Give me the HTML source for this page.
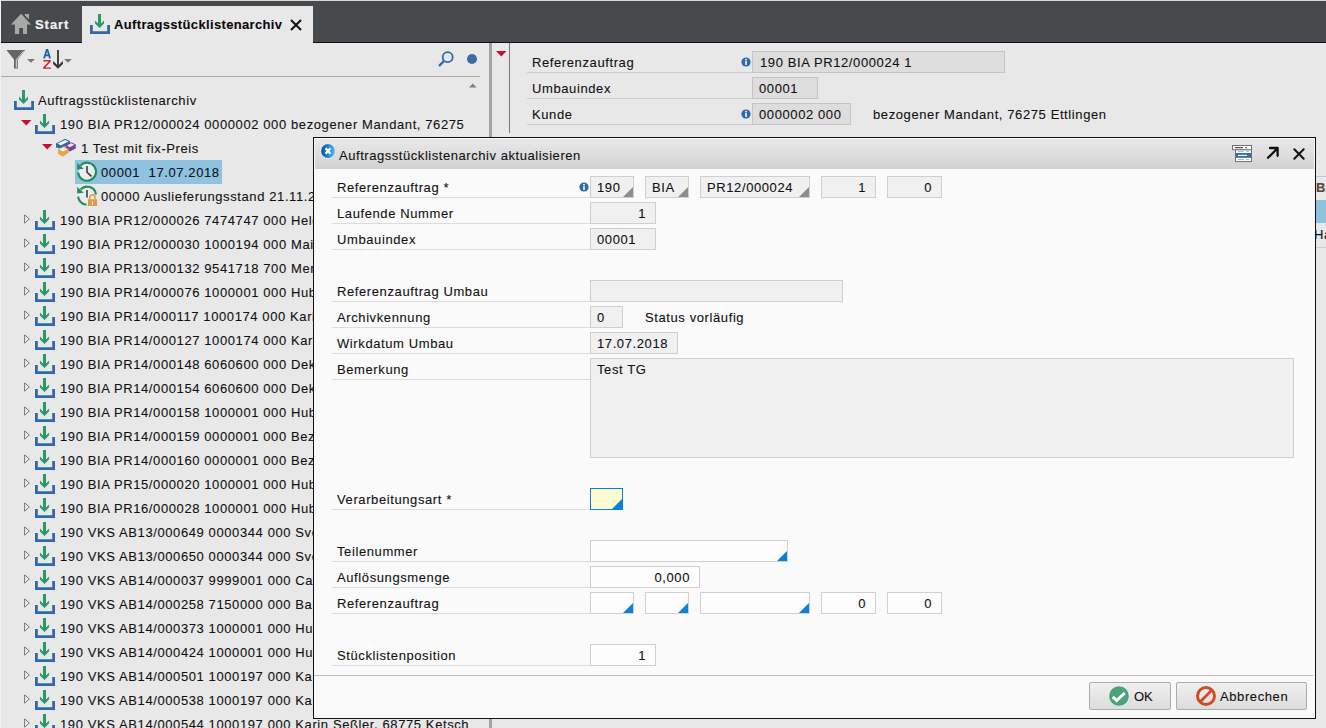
<!DOCTYPE html>
<html><head><meta charset="utf-8">
<style>
*{box-sizing:border-box}
html,body{margin:0;padding:0}
body{width:1326px;height:728px;overflow:hidden;position:relative;background:#e8e8e8;font-family:"Liberation Sans",sans-serif;font-size:13px;color:#111}
.t{position:absolute;white-space:pre;line-height:16px;letter-spacing:0.6px;-webkit-text-stroke:0.1px #111}
.ic{position:absolute;overflow:visible}
.abs{position:absolute}
.f{position:absolute;height:22px;border:1px solid #cfcfcf;background:#f0f0f0}
.fr{position:absolute;height:22px;border:1px solid #c4c4c4;background:#dddddd}
.fw{position:absolute;height:22px;border:1px solid #d0d0d0;background:#fdfdfd}
.ln{position:absolute;height:1px;background:#dcdcdc}
</style></head><body>
<svg width="0" height="0" style="position:absolute">
<defs>
<symbol id="dl" viewBox="0 0 20 20">
<path d="M1.4 11V18.6H18.6V11" fill="none" stroke="#3068a8" stroke-width="2.8"/>
<path d="M8 0H11V9.5L14 6.5V9.5L9.5 14L5 9.5V6.5L8 9.5Z" fill="#2a9a6a"/>
</symbol>
<symbol id="info" viewBox="0 0 10 10">
<circle cx="5" cy="5" r="4.6" fill="#2f68a8"/>
<rect x="4.2" y="4.1" width="1.6" height="3.8" fill="#fff"/>
<circle cx="5" cy="2.7" r="0.9" fill="#fff"/>
</symbol>
</defs></svg>

<div class="abs" style="left:0;top:0;width:1326px;height:1px;background:#d8d8d8"></div>
<div class="abs" style="left:0;top:0;width:1px;height:728px;background:#f2f2f2"></div>
<div class="abs" style="left:1px;top:1px;width:1325px;height:41px;background:#464a4d"></div>
<div class="abs" style="left:1px;top:42px;width:81px;height:1px;background:#111"></div>
<div class="abs" style="left:313px;top:42px;width:1013px;height:1px;background:#111"></div>
<svg class="ic" width="28" height="28" viewBox="0 0 28 28" style="left:8px;top:10px"><path d="M13.1 3.8L2.9 14.6H6.9V24H11.2V18.1H15V24H19V14.6H23.1Z" fill="#a8a8a8"/><path d="M16.9 4H21V9.6L16.9 5.3Z" fill="#a8a8a8"/></svg>
<div class="t" style="left:35px;top:17px;color:#f2f2f2;font-weight:bold;letter-spacing:0.95px;-webkit-text-stroke:0.2px #f2f2f2">Start</div>
<div class="abs" style="left:82px;top:6px;width:231px;height:37px;background:#e8e8e8"></div>
<svg class="ic" width="20" height="20" viewBox="0 0 20 20" style="left:90px;top:14px"><use href="#dl"/></svg>
<div class="t" style="left:114px;top:17px;font-weight:bold;letter-spacing:0.35px;color:#0a0a0a">Auftragsstücklistenarchiv</div>
<svg class="ic" width="12" height="12" viewBox="0 0 12 12" style="left:290px;top:18.5px"><path d="M1 1L11 11M11 1L1 11" stroke="#111" stroke-width="2"/></svg>
<svg class="ic" width="32" height="24" viewBox="0 0 32 24" style="left:4px;top:46px"><path d="M2.4 4.1H21.2L13.8 13.6V22.5H10V13.6Z" fill="#666"/><path d="M19.6 5.2L12.3 13.8V21.6" fill="none" stroke="#e8e8e8" stroke-width="0.9"/><path d="M23 13H30.9L26.95 16.8Z" fill="#777"/></svg>
<svg class="ic" width="32" height="24" viewBox="0 0 32 24" style="left:42px;top:46px"><path fill-rule="evenodd" d="M1.1 12.5L4.1 3H6.1L9 12.5H7.1L6.4 10.2H3.7L3 12.5ZM4.2 8.5H5.9L5.05 5.6Z" fill="#2060b0"/><path d="M1.4 14.1H8.8V15.4L3.3 21.5H9V22.8H1.1V21.5L6.6 15.4H1.4Z" fill="#c03020"/><path d="M16 4V20" stroke="#333" stroke-width="1.8"/><path d="M11.1 15L16 19.8L20.9 15V18L16 22.8L11.1 18Z" fill="#333"/><path d="M22 13H29.9L25.95 16.8Z" fill="#777"/></svg>
<svg class="ic" width="20" height="20" viewBox="0 0 20 20" style="left:436px;top:49px"><circle cx="11.7" cy="8.2" r="5" fill="none" stroke="#2f68a8" stroke-width="1.8"/><path d="M8 12L3 17" stroke="#2f68a8" stroke-width="2.4"/></svg>
<div class="abs" style="left:467px;top:54px;width:10px;height:10px;border-radius:50%;background:#3a6ea5"></div>
<div class="abs" style="left:1px;top:76px;width:479px;height:1px;background:#a8a8a8"></div>
<svg class="ic" width="8" height="5" viewBox="0 0 8 5" style="left:469px;top:82.5px"><path d="M0 4.5H7.5L3.75 0.5Z" fill="#808080"/></svg>
<svg class="ic" width="20" height="20" viewBox="0 0 20 20" style="left:14px;top:90px"><use href="#dl"/></svg>
<div class="t" style="left:38px;top:93px;">Auftragsstücklistenarchiv</div>
<svg class="ic" width="11" height="6" viewBox="0 0 11 6" style="left:21px;top:119.5px"><path d="M0 0H10.5L5.25 5.5Z" fill="#c8102e"/></svg>
<svg class="ic" width="20" height="20" viewBox="0 0 20 20" style="left:35px;top:114px"><use href="#dl"/></svg>
<div class="t" style="left:60px;top:117px;">190 BIA PR12/000024 0000002 000 bezogener Mandant, 76275</div>
<svg class="ic" width="11" height="6" viewBox="0 0 11 6" style="left:42px;top:143.5px"><path d="M0 0H10.5L5.25 5.5Z" fill="#c8102e"/></svg>
<svg class="ic" width="24" height="24" viewBox="0 0 24 24" style="left:54px;top:136px">
<path d="M2 7.4L11.2 2.8L16 5.3V7.8L6.8 12.4L2 11.6Z" fill="#2f68a8"/><path d="M3.6 7.5L11.1 3.9L14.4 5.6L6.6 9.6Z" fill="#f2f4f8"/>
<path d="M11.5 9.6L17.4 6.2L21.8 8.6V12.5L15.8 15.6L11.5 13Z" fill="#7d3ea6"/><path d="M13 9.6L17.4 7.3L20.3 8.8L15.8 11.2Z" fill="#f2eef6"/>
<path d="M4 13.2L9.6 10.3L14.8 13.2V16.5L8.6 20.8L4 17.8Z" fill="#e2a84c"/><path d="M5.3 13.3L9.6 11.3L13.4 13.4L8.8 15.6Z" fill="#f4f2ec"/>
</svg>
<div class="t" style="left:81px;top:141px;">1 Test mit fix-Preis</div>
<div class="abs" style="left:75px;top:160px;width:147px;height:24px;background:#8fc1e0"></div>
<svg class="ic" width="22" height="22" viewBox="0 0 22 22" style="left:76px;top:161px">
<circle cx="11.1" cy="10.7" r="8.5" fill="#ececec"/>
<path d="M2.1 11.6A9 9 0 1 0 4.6 4.4" fill="none" stroke="#1f8f5a" stroke-width="2.1"/>
<path d="M1.2 2L1.2 8.6L7.8 7.8Z" fill="#1f8f5a"/>
<path d="M11 5V11.2L15.4 15.4" fill="none" stroke="#333" stroke-width="1.5"/>
</svg>
<div class="t" style="left:101px;top:165px;">00001  17.07.2018</div>
<svg class="ic" width="22" height="22" viewBox="0 0 22 22" style="left:76px;top:185px">
<circle cx="11.1" cy="10.7" r="8.5" fill="#ececec"/>
<path d="M4.6 4.4A9 9 0 0 1 20 9.5" fill="none" stroke="#1f8f5a" stroke-width="2.1"/>
<path d="M2.1 11.6A9 9 0 0 0 10.5 19.7" fill="none" stroke="#1f8f5a" stroke-width="2.1"/>
<path d="M1.2 2L1.2 8.6L7.8 7.8Z" fill="#1f8f5a"/>
<path d="M11 5V12.5" fill="none" stroke="#333" stroke-width="1.5"/>
<path d="M13.8 14.2V12.4A2.65 2.65 0 0 1 19.1 12.4V14.2" fill="none" stroke="#dc9d45" stroke-width="1.6"/>
<rect x="12" y="14.2" width="9.1" height="6.8" fill="#dc9d45"/><rect x="16.2" y="16" width="0.8" height="4" fill="#fff"/>
</svg>
<div class="t" style="left:101px;top:189px;">00000 Auslieferungsstand 21.11.2017</div>
<svg class="ic" width="7" height="10" viewBox="0 0 7 10" style="left:23.5px;top:214px"><path d="M0.6 0.8V9.2L5.4 5Z" fill="none" stroke="#7a7a7a" stroke-width="1"/></svg>
<svg class="ic" width="20" height="20" viewBox="0 0 20 20" style="left:35px;top:210px"><use href="#dl"/></svg>
<div class="t" style="left:60px;top:213px;">190 BIA PR12/000026 7474747 000 Helga Berger, 76131 Karlsruhe</div>
<svg class="ic" width="7" height="10" viewBox="0 0 7 10" style="left:23.5px;top:238px"><path d="M0.6 0.8V9.2L5.4 5Z" fill="none" stroke="#7a7a7a" stroke-width="1"/></svg>
<svg class="ic" width="20" height="20" viewBox="0 0 20 20" style="left:35px;top:234px"><use href="#dl"/></svg>
<div class="t" style="left:60px;top:237px;">190 BIA PR12/000030 1000194 000 Maiwald GmbH, 76227 Karlsruhe</div>
<svg class="ic" width="7" height="10" viewBox="0 0 7 10" style="left:23.5px;top:262px"><path d="M0.6 0.8V9.2L5.4 5Z" fill="none" stroke="#7a7a7a" stroke-width="1"/></svg>
<svg class="ic" width="20" height="20" viewBox="0 0 20 20" style="left:35px;top:258px"><use href="#dl"/></svg>
<div class="t" style="left:60px;top:261px;">190 BIA PR13/000132 9541718 700 Merkle AG, 70173 Stuttgart</div>
<svg class="ic" width="7" height="10" viewBox="0 0 7 10" style="left:23.5px;top:286px"><path d="M0.6 0.8V9.2L5.4 5Z" fill="none" stroke="#7a7a7a" stroke-width="1"/></svg>
<svg class="ic" width="20" height="20" viewBox="0 0 20 20" style="left:35px;top:282px"><use href="#dl"/></svg>
<div class="t" style="left:60px;top:285px;">190 BIA PR14/000076 1000001 000 Huber GmbH, 76185 Karlsruhe</div>
<svg class="ic" width="7" height="10" viewBox="0 0 7 10" style="left:23.5px;top:310px"><path d="M0.6 0.8V9.2L5.4 5Z" fill="none" stroke="#7a7a7a" stroke-width="1"/></svg>
<svg class="ic" width="20" height="20" viewBox="0 0 20 20" style="left:35px;top:306px"><use href="#dl"/></svg>
<div class="t" style="left:60px;top:309px;">190 BIA PR14/000117 1000174 000 Karin Meier, 76275 Ettlingen</div>
<svg class="ic" width="7" height="10" viewBox="0 0 7 10" style="left:23.5px;top:334px"><path d="M0.6 0.8V9.2L5.4 5Z" fill="none" stroke="#7a7a7a" stroke-width="1"/></svg>
<svg class="ic" width="20" height="20" viewBox="0 0 20 20" style="left:35px;top:330px"><use href="#dl"/></svg>
<div class="t" style="left:60px;top:333px;">190 BIA PR14/000127 1000174 000 Karin Meier, 76275 Ettlingen</div>
<svg class="ic" width="7" height="10" viewBox="0 0 7 10" style="left:23.5px;top:358px"><path d="M0.6 0.8V9.2L5.4 5Z" fill="none" stroke="#7a7a7a" stroke-width="1"/></svg>
<svg class="ic" width="20" height="20" viewBox="0 0 20 20" style="left:35px;top:354px"><use href="#dl"/></svg>
<div class="t" style="left:60px;top:357px;">190 BIA PR14/000148 6060600 000 Dekra AG, 70565 Stuttgart</div>
<svg class="ic" width="7" height="10" viewBox="0 0 7 10" style="left:23.5px;top:382px"><path d="M0.6 0.8V9.2L5.4 5Z" fill="none" stroke="#7a7a7a" stroke-width="1"/></svg>
<svg class="ic" width="20" height="20" viewBox="0 0 20 20" style="left:35px;top:378px"><use href="#dl"/></svg>
<div class="t" style="left:60px;top:381px;">190 BIA PR14/000154 6060600 000 Dekra AG, 70565 Stuttgart</div>
<svg class="ic" width="7" height="10" viewBox="0 0 7 10" style="left:23.5px;top:406px"><path d="M0.6 0.8V9.2L5.4 5Z" fill="none" stroke="#7a7a7a" stroke-width="1"/></svg>
<svg class="ic" width="20" height="20" viewBox="0 0 20 20" style="left:35px;top:402px"><use href="#dl"/></svg>
<div class="t" style="left:60px;top:405px;">190 BIA PR14/000158 1000001 000 Huber GmbH, 76185 Karlsruhe</div>
<svg class="ic" width="7" height="10" viewBox="0 0 7 10" style="left:23.5px;top:430px"><path d="M0.6 0.8V9.2L5.4 5Z" fill="none" stroke="#7a7a7a" stroke-width="1"/></svg>
<svg class="ic" width="20" height="20" viewBox="0 0 20 20" style="left:35px;top:426px"><use href="#dl"/></svg>
<div class="t" style="left:60px;top:429px;">190 BIA PR14/000159 0000001 000 Bezogener Mandant</div>
<svg class="ic" width="7" height="10" viewBox="0 0 7 10" style="left:23.5px;top:454px"><path d="M0.6 0.8V9.2L5.4 5Z" fill="none" stroke="#7a7a7a" stroke-width="1"/></svg>
<svg class="ic" width="20" height="20" viewBox="0 0 20 20" style="left:35px;top:450px"><use href="#dl"/></svg>
<div class="t" style="left:60px;top:453px;">190 BIA PR14/000160 0000001 000 Bezogener Mandant</div>
<svg class="ic" width="7" height="10" viewBox="0 0 7 10" style="left:23.5px;top:478px"><path d="M0.6 0.8V9.2L5.4 5Z" fill="none" stroke="#7a7a7a" stroke-width="1"/></svg>
<svg class="ic" width="20" height="20" viewBox="0 0 20 20" style="left:35px;top:474px"><use href="#dl"/></svg>
<div class="t" style="left:60px;top:477px;">190 BIA PR15/000020 1000001 000 Huber GmbH, 76185 Karlsruhe</div>
<svg class="ic" width="7" height="10" viewBox="0 0 7 10" style="left:23.5px;top:502px"><path d="M0.6 0.8V9.2L5.4 5Z" fill="none" stroke="#7a7a7a" stroke-width="1"/></svg>
<svg class="ic" width="20" height="20" viewBox="0 0 20 20" style="left:35px;top:498px"><use href="#dl"/></svg>
<div class="t" style="left:60px;top:501px;">190 BIA PR16/000028 1000001 000 Huber GmbH, 76185 Karlsruhe</div>
<svg class="ic" width="7" height="10" viewBox="0 0 7 10" style="left:23.5px;top:526px"><path d="M0.6 0.8V9.2L5.4 5Z" fill="none" stroke="#7a7a7a" stroke-width="1"/></svg>
<svg class="ic" width="20" height="20" viewBox="0 0 20 20" style="left:35px;top:522px"><use href="#dl"/></svg>
<div class="t" style="left:60px;top:525px;">190 VKS AB13/000649 0000344 000 Sven Maier, 76133 Karlsruhe</div>
<svg class="ic" width="7" height="10" viewBox="0 0 7 10" style="left:23.5px;top:550px"><path d="M0.6 0.8V9.2L5.4 5Z" fill="none" stroke="#7a7a7a" stroke-width="1"/></svg>
<svg class="ic" width="20" height="20" viewBox="0 0 20 20" style="left:35px;top:546px"><use href="#dl"/></svg>
<div class="t" style="left:60px;top:549px;">190 VKS AB13/000650 0000344 000 Sven Maier, 76133 Karlsruhe</div>
<svg class="ic" width="7" height="10" viewBox="0 0 7 10" style="left:23.5px;top:574px"><path d="M0.6 0.8V9.2L5.4 5Z" fill="none" stroke="#7a7a7a" stroke-width="1"/></svg>
<svg class="ic" width="20" height="20" viewBox="0 0 20 20" style="left:35px;top:570px"><use href="#dl"/></svg>
<div class="t" style="left:60px;top:573px;">190 VKS AB14/000037 9999001 000 Carl Weber, 76131 Karlsruhe</div>
<svg class="ic" width="7" height="10" viewBox="0 0 7 10" style="left:23.5px;top:598px"><path d="M0.6 0.8V9.2L5.4 5Z" fill="none" stroke="#7a7a7a" stroke-width="1"/></svg>
<svg class="ic" width="20" height="20" viewBox="0 0 20 20" style="left:35px;top:594px"><use href="#dl"/></svg>
<div class="t" style="left:60px;top:597px;">190 VKS AB14/000258 7150000 000 Bart GmbH, 76189 Karlsruhe</div>
<svg class="ic" width="7" height="10" viewBox="0 0 7 10" style="left:23.5px;top:622px"><path d="M0.6 0.8V9.2L5.4 5Z" fill="none" stroke="#7a7a7a" stroke-width="1"/></svg>
<svg class="ic" width="20" height="20" viewBox="0 0 20 20" style="left:35px;top:618px"><use href="#dl"/></svg>
<div class="t" style="left:60px;top:621px;">190 VKS AB14/000373 1000001 000 Huber GmbH, 76185 Karlsruhe</div>
<svg class="ic" width="7" height="10" viewBox="0 0 7 10" style="left:23.5px;top:646px"><path d="M0.6 0.8V9.2L5.4 5Z" fill="none" stroke="#7a7a7a" stroke-width="1"/></svg>
<svg class="ic" width="20" height="20" viewBox="0 0 20 20" style="left:35px;top:642px"><use href="#dl"/></svg>
<div class="t" style="left:60px;top:645px;">190 VKS AB14/000424 1000001 000 Huber GmbH, 76185 Karlsruhe</div>
<svg class="ic" width="7" height="10" viewBox="0 0 7 10" style="left:23.5px;top:670px"><path d="M0.6 0.8V9.2L5.4 5Z" fill="none" stroke="#7a7a7a" stroke-width="1"/></svg>
<svg class="ic" width="20" height="20" viewBox="0 0 20 20" style="left:35px;top:666px"><use href="#dl"/></svg>
<div class="t" style="left:60px;top:669px;">190 VKS AB14/000501 1000197 000 Karin Seßler, 68775 Ketsch</div>
<svg class="ic" width="7" height="10" viewBox="0 0 7 10" style="left:23.5px;top:694px"><path d="M0.6 0.8V9.2L5.4 5Z" fill="none" stroke="#7a7a7a" stroke-width="1"/></svg>
<svg class="ic" width="20" height="20" viewBox="0 0 20 20" style="left:35px;top:690px"><use href="#dl"/></svg>
<div class="t" style="left:60px;top:693px;">190 VKS AB14/000538 1000197 000 Karin Seßler, 68775 Ketsch</div>
<svg class="ic" width="7" height="10" viewBox="0 0 7 10" style="left:23.5px;top:718px"><path d="M0.6 0.8V9.2L5.4 5Z" fill="none" stroke="#7a7a7a" stroke-width="1"/></svg>
<svg class="ic" width="20" height="20" viewBox="0 0 20 20" style="left:35px;top:714px"><use href="#dl"/></svg>
<div class="t" style="left:60px;top:717px;">190 VKS AB14/000544 1000197 000 Karin Seßler, 68775 Ketsch</div>
<div class="abs" style="left:489px;top:43px;width:3px;height:685px;background:#a4a4a4"></div>
<svg class="ic" width="11" height="6" viewBox="0 0 11 6" style="left:495.5px;top:50.5px"><path d="M0 0H10.5L5.25 5.5Z" fill="#c8102e"/></svg>
<div class="abs" style="left:509px;top:43px;width:1px;height:90px;background:#7a7a7a"></div>
<div class="t" style="left:532px;top:55px;">Referenzauftrag</div>
<div class="abs" style="left:527px;top:72px;width:225px;height:1px;background:#cdcdcd"></div>
<div class="t" style="left:532px;top:81px;">Umbauindex</div>
<div class="abs" style="left:527px;top:98px;width:225px;height:1px;background:#cdcdcd"></div>
<div class="t" style="left:532px;top:107px;">Kunde</div>
<div class="abs" style="left:527px;top:124px;width:225px;height:1px;background:#cdcdcd"></div>
<svg class="ic" width="10" height="10" style="left:741px;top:57px"><use href="#info"/></svg>
<svg class="ic" width="10" height="10" style="left:741px;top:109px"><use href="#info"/></svg>
<div class="fr" style="left:752px;top:51px;width:253px"></div>
<div class="t" style="left:760px;top:55px;">190 BIA PR12/000024 1</div>
<div class="fr" style="left:752px;top:77px;width:66px"></div>
<div class="t" style="left:759px;top:81px;">00001</div>
<div class="fr" style="left:752px;top:103px;width:99px"></div>
<div class="t" style="left:759px;top:107px;">0000002 000</div>
<div class="t" style="left:873px;top:107px;">bezogener Mandant, 76275 Ettlingen</div>
<div class="abs" style="left:1316px;top:176px;width:10px;height:1px;background:#c8c8c8"></div>
<div class="t" style="left:1316px;top:180px;font-weight:bold;color:#5a4a3a">Be</div>
<div class="abs" style="left:1316px;top:200px;width:10px;height:23px;background:#8fc1e0"></div>
<div class="t" style="left:1314px;top:227px">Ha</div>
<div class="abs" style="left:1316px;top:247px;width:10px;height:1px;background:#d0d0d0"></div>
<div class="abs" style="left:313px;top:137px;width:1003px;height:582px;background:#fafafa;border:1px solid #111"></div>
<div class="abs" style="left:315px;top:139px;width:999px;height:30px;background:linear-gradient(#e9e9e9,#d2d2d2)"></div>
<svg class="ic" width="16" height="16" viewBox="0 0 16 16" style="left:320px;top:143px"><defs><linearGradient id="tg" x1="0" x2="1" y1="0" y2="0"><stop offset="0" stop-color="#0a5590"/><stop offset="0.5" stop-color="#1f86c8"/><stop offset="1" stop-color="#5ab8e6"/></linearGradient></defs><circle cx="8" cy="8" r="7.6" fill="#e6f2fb"/><circle cx="8" cy="8" r="6.9" fill="url(#tg)"/><path d="M5.6 5.2L10.4 10.8M10.4 5.2L5.6 10.8" stroke="#fff" stroke-width="2.1"/></svg>
<div class="t" style="left:339px;top:148px;letter-spacing:0.55px">Auftragsstücklistenarchiv aktualisieren</div>
<svg class="ic" width="21" height="18" viewBox="0 0 21 18" style="left:1232px;top:145px">
<rect x="3.5" y="4.6" width="16" height="12" fill="#fff" stroke="#707070"/>
<rect x="0.5" y="0.5" width="19" height="4.2" fill="#fff" stroke="#707070"/>
<rect x="4" y="8" width="15" height="4.8" fill="#2f6db5"/>
<path d="M3 2.6H11M13.2 2.6H15" stroke="#555" stroke-width="1.1"/>
<path d="M6 6.3H12M14 6.3H17M6 14.6H12M14 14.6H17" stroke="#aaa" stroke-width="0.9"/>
<path d="M6 10.4H15" stroke="#fff" stroke-width="1.1"/>
</svg>
<svg class="ic" width="14" height="14" viewBox="0 0 14 14" style="left:1266px;top:146px"><path d="M2 11.8L11 2.8M4 2H11.6V9.8" fill="none" stroke="#111" stroke-width="2.3" stroke-linecap="round" stroke-linejoin="round"/></svg>
<svg class="ic" width="12" height="12" viewBox="0 0 12 12" style="left:1292.5px;top:147.5px"><path d="M1.3 1.3L10.7 10.7M10.7 1.3L1.3 10.7" stroke="#111" stroke-width="2" stroke-linecap="round"/></svg>
<div class="t" style="left:337px;top:180px;">Referenzauftrag *</div>
<div class="ln" style="left:332px;top:197px;width:258px"></div>
<svg class="ic" width="10" height="10" style="left:578.5px;top:182px"><use href="#info"/></svg>
<div class="f" style="left:590px;top:176px;width:44px"></div>
<div class="t" style="left:597px;top:180px;">190</div>
<svg class="ic" width="10" height="10" viewBox="0 0 10 10" style="left:623px;top:187px"><path d="M10 0V10H0Z" fill="#8e8e8e"/></svg>
<div class="f" style="left:645px;top:176px;width:44px"></div>
<div class="t" style="left:652px;top:180px;">BIA</div>
<svg class="ic" width="10" height="10" viewBox="0 0 10 10" style="left:678px;top:187px"><path d="M10 0V10H0Z" fill="#8e8e8e"/></svg>
<div class="f" style="left:700px;top:176px;width:110px"></div>
<div class="t" style="left:707px;top:180px;">PR12/000024</div>
<svg class="ic" width="10" height="10" viewBox="0 0 10 10" style="left:799px;top:187px"><path d="M10 0V10H0Z" fill="#8e8e8e"/></svg>
<div class="f" style="left:821px;top:176px;width:55px"></div>
<div class="t" style="left:821px;top:180px;width:45px;text-align:right">1</div>
<div class="f" style="left:887px;top:176px;width:55px"></div>
<div class="t" style="left:887px;top:180px;width:45px;text-align:right">0</div>
<div class="t" style="left:337px;top:206px;">Laufende Nummer</div>
<div class="ln" style="left:332px;top:223px;width:258px"></div>
<div class="f" style="left:590px;top:202px;width:66px"></div>
<div class="t" style="left:590px;top:206px;width:56px;text-align:right">1</div>
<div class="t" style="left:337px;top:232px;">Umbauindex</div>
<div class="ln" style="left:332px;top:249px;width:258px"></div>
<div class="f" style="left:590px;top:228px;width:66px"></div>
<div class="t" style="left:597px;top:232px;">00001</div>
<div class="t" style="left:337px;top:284px;">Referenzauftrag Umbau</div>
<div class="ln" style="left:332px;top:301px;width:258px"></div>
<div class="f" style="left:590px;top:280px;width:253px"></div>
<div class="t" style="left:337px;top:310px;">Archivkennung</div>
<div class="ln" style="left:332px;top:327px;width:258px"></div>
<div class="f" style="left:590px;top:306px;width:33px"></div>
<div class="t" style="left:597px;top:310px;">0</div>
<div class="t" style="left:645px;top:310px;">Status vorläufig</div>
<div class="t" style="left:337px;top:336px;">Wirkdatum Umbau</div>
<div class="ln" style="left:332px;top:353px;width:258px"></div>
<div class="f" style="left:590px;top:332px;width:88px"></div>
<div class="t" style="left:597px;top:336px;">17.07.2018</div>
<div class="t" style="left:337px;top:362px;">Bemerkung</div>
<div class="ln" style="left:332px;top:379px;width:258px"></div>
<div class="f" style="left:590px;top:358px;width:704px;height:100px"></div>
<div class="t" style="left:597px;top:362px;">Test TG</div>
<div class="t" style="left:337px;top:492px;">Verarbeitungsart *</div>
<div class="ln" style="left:332px;top:509px;width:258px"></div>
<div class="abs" style="left:590px;top:488px;width:33px;height:22px;background:#fdfbcf;border:1px solid #0b80d8"></div>
<svg class="ic" width="10" height="10" viewBox="0 0 10 10" style="left:612px;top:499px"><path d="M10 0V10H0Z" fill="#0b80d8"/></svg>
<div class="t" style="left:337px;top:544px;">Teilenummer</div>
<div class="ln" style="left:332px;top:561px;width:258px"></div>
<div class="fw" style="left:590px;top:540px;width:198px"></div>
<svg class="ic" width="10" height="10" viewBox="0 0 10 10" style="left:777px;top:551px"><path d="M10 0V10H0Z" fill="#0b80d8"/></svg>
<div class="t" style="left:337px;top:570px;">Auflösungsmenge</div>
<div class="ln" style="left:332px;top:587px;width:258px"></div>
<div class="fw" style="left:590px;top:566px;width:110px"></div>
<div class="t" style="left:590px;top:570px;width:100px;text-align:right">0,000</div>
<div class="t" style="left:337px;top:596px;">Referenzauftrag</div>
<div class="ln" style="left:332px;top:613px;width:258px"></div>
<div class="fw" style="left:590px;top:592px;width:44px"></div>
<svg class="ic" width="10" height="10" viewBox="0 0 10 10" style="left:623px;top:603px"><path d="M10 0V10H0Z" fill="#0b80d8"/></svg>
<div class="fw" style="left:645px;top:592px;width:44px"></div>
<svg class="ic" width="10" height="10" viewBox="0 0 10 10" style="left:678px;top:603px"><path d="M10 0V10H0Z" fill="#0b80d8"/></svg>
<div class="fw" style="left:700px;top:592px;width:110px"></div>
<svg class="ic" width="10" height="10" viewBox="0 0 10 10" style="left:799px;top:603px"><path d="M10 0V10H0Z" fill="#0b80d8"/></svg>
<div class="fw" style="left:821px;top:592px;width:55px"></div>
<div class="t" style="left:821px;top:596px;width:45px;text-align:right">0</div>
<div class="fw" style="left:887px;top:592px;width:55px"></div>
<div class="t" style="left:887px;top:596px;width:45px;text-align:right">0</div>
<div class="t" style="left:337px;top:648px;">Stücklistenposition</div>
<div class="ln" style="left:332px;top:665px;width:258px"></div>
<div class="fw" style="left:590px;top:644px;width:66px"></div>
<div class="t" style="left:590px;top:648px;width:56px;text-align:right">1</div>
<div class="abs" style="left:314px;top:675px;width:999px;height:1px;background:#bdbdbd"></div>
<div style="position:absolute;height:28px;border:1px solid #acacac;border-radius:2px;background:linear-gradient(#f0f0f0,#dcdcdc);left:1089px;top:682px;width:82px"></div>
<svg class="ic" width="20" height="20" viewBox="0 0 20 20" style="left:1109px;top:686px"><circle cx="10" cy="10" r="9.8" fill="#48a27a"/><path d="M3.8 10.8L7.6 14.4L15.8 7" fill="none" stroke="#fff" stroke-width="3"/></svg>
<div class="t" style="left:1134px;top:689px;letter-spacing:0px">OK</div>
<div style="position:absolute;height:28px;border:1px solid #acacac;border-radius:2px;background:linear-gradient(#f0f0f0,#dcdcdc);left:1176px;top:682px;width:131px"></div>
<svg class="ic" width="20" height="20" viewBox="0 0 20 20" style="left:1196px;top:686px"><circle cx="10" cy="10" r="8.5" fill="none" stroke="#d04a2a" stroke-width="2.9"/><path d="M4.5 15.5L15.5 4.5" stroke="#d04a2a" stroke-width="2.9"/></svg>
<div class="t" style="left:1220px;top:689px;">Abbrechen</div>
</body></html>
